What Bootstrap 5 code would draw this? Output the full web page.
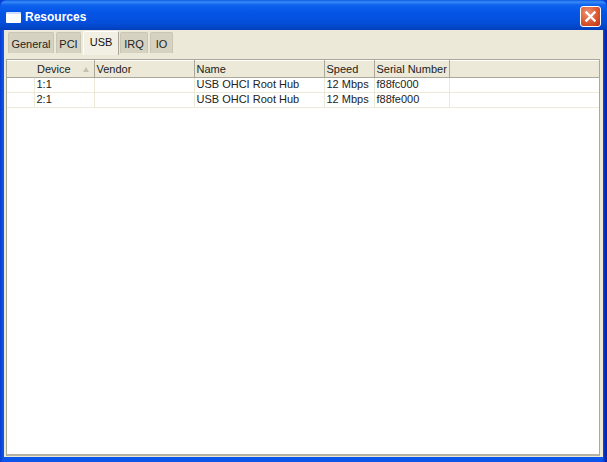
<!DOCTYPE html>
<html lang="en"><head><meta charset="utf-8"><title>Resources</title>
<link href="https://cdn.jsdelivr.net/npm/bootstrap@5.3.0/dist/css/bootstrap.min.css" rel="stylesheet">
<style>
html,body{margin:0;height:462px;overflow:hidden;background:#0a3fd6}
body{font-family:"Liberation Sans",sans-serif;font-size:11px;color:#111}
.xpwin{width:607px;height:462px;border-radius:7px 7px 0 0;overflow:hidden;padding:0 4px 5px;
 background:linear-gradient(90deg,#0a3ad0 0,#0b55e8 3px,#0b55e8 4px,#0b55e8 603px,#0738c8 604px,#0420a8 607px)}
.xptitle{height:30px;margin:0 -4px;padding:4px 6px 0 6px;
 background:linear-gradient(180deg,#0a5ae8 0,#3a8bf5 2px,#0d62ee 5px,#0555e6 12px,#0450dc 22px,#0346c8 27px,#033fb8 30px);
 color:#fff;font:bold 12px "Liberation Sans",sans-serif}
.xpicon{width:15px;height:11px;background:#fff;border-top:2px solid #cfe0ff;border-radius:1px}
.xpclose{width:21px;height:21px;border:1px solid #fff;border-radius:3px;background:radial-gradient(circle at 35% 30%,#ee9170,#d9532c 60%,#b8341a)}
.xptitle .xpclose{margin-top:-1px}
.xpbody{height:427px;background:#ece9d8;padding:1px 3px 2px 2px}
.xptabs{height:24px;border-bottom:0;gap:2px;padding:0 0 0 2px;align-items:flex-end;flex-wrap:nowrap}
.xptabs .nav-link{font-size:11px;line-height:14px;color:#222;background:#d6d2c1;border:1px solid #c9c6b5;border-bottom:0;border-radius:2px 2px 0 0;padding:4px 0 2px;margin:0 0 2px;height:21px;text-align:center}
.xptabs .nav-link.active{background:#f2f0e4;color:#111;height:24px;margin:0 -1px 0 0;padding:3px 0 6px;border-color:#fff #aca899 #fff #fff}
.xptabs .nav-item:nth-child(1) .nav-link{width:46px}
.xptabs .nav-item:nth-child(2) .nav-link{width:25px}
.xptabs .nav-item:nth-child(3) .nav-link{width:36px}
.xptabs .nav-item:nth-child(4) .nav-link{width:28px}
.xptabs .nav-item:nth-child(5) .nav-link{width:23px}
.xpframe{height:397px;margin:4px 0 0;background:#fff;border:1px solid #aca899;border-bottom:2px solid #b5b2a2;overflow:hidden}
.xptable{table-layout:fixed;width:594px;margin:0;border-collapse:collapse;--bs-table-bg:transparent}
.xptable col:nth-child(1){width:27px}.xptable col:nth-child(2){width:60px}.xptable col:nth-child(3){width:100px}
.xptable col:nth-child(4){width:130px}.xptable col:nth-child(5){width:50px}.xptable col:nth-child(6){width:75px}
.xptable th{font-weight:400;height:17px;padding:0 2px;line-height:15px;background:#ece9d8;border:0;border-right:1px solid #aca899;border-bottom:1px solid #aca899;border-top:1px solid #fff;color:#222;white-space:nowrap}
.xptable th:nth-child(2){padding-left:3px}
.xptable th:first-child,.xptable th:last-child{border-right:0}
.xptable td{height:15px;padding:0 2px;line-height:13px;vertical-align:top;border:0;border-right:1px solid #ece9d8;border-bottom:1px solid #ece9d8;color:#222;white-space:nowrap}
.xptable td:last-child{border-right:0}
.xpsort{float:right;margin:5px 3px 0 0;width:0;height:0;border-left:3px solid transparent;border-right:3px solid transparent;border-bottom:5px solid #c4c1b0}
</style></head><body>
<div class="xpwin d-flex flex-column">
 <div class="xptitle d-flex align-items-center">
  <div class="xpicon"></div>
  <div class="flex-grow-1 ms-1">Resources</div>
  <div class="xpclose d-flex align-items-center justify-content-center">
   <svg width="13" height="13" viewBox="0 0 13 13"><path d="M2.5 2.5l8 8M10.5 2.5l-8 8" stroke="#fff" stroke-width="2.4" stroke-linecap="square"/></svg>
  </div>
 </div>
 <div class="xpbody">
  <ul class="nav nav-tabs xptabs">
   <li class="nav-item"><a class="nav-link" href="#">General</a></li>
   <li class="nav-item"><a class="nav-link" href="#">PCI</a></li>
   <li class="nav-item"><a class="nav-link active" href="#">USB</a></li>
   <li class="nav-item"><a class="nav-link" href="#">IRQ</a></li>
   <li class="nav-item"><a class="nav-link" href="#">IO</a></li>
  </ul>
  <div class="xpframe">
   <table class="table xptable">
    <colgroup><col><col><col><col><col><col><col></colgroup>
    <thead><tr><th></th><th>Device<span class="xpsort"></span></th><th>Vendor</th><th>Name</th><th>Speed</th><th>Serial Number</th><th></th></tr></thead>
    <tbody>
     <tr><td></td><td>1:1</td><td></td><td>USB OHCI Root Hub</td><td>12 Mbps</td><td>f88fc000</td><td></td></tr>
     <tr><td></td><td>2:1</td><td></td><td>USB OHCI Root Hub</td><td>12 Mbps</td><td>f88fe000</td><td></td></tr>
    </tbody>
   </table>
  </div>
 </div>
</div>
<script src="https://cdn.jsdelivr.net/npm/bootstrap@5.3.0/dist/js/bootstrap.bundle.min.js"></script>
</body></html>
